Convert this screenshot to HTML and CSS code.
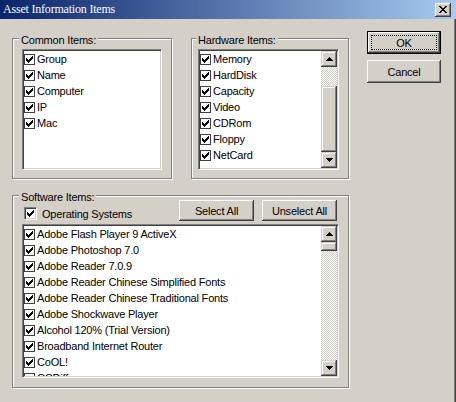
FILE: index.html
```html
<!DOCTYPE html>
<html>
<head>
<meta charset="utf-8">
<title>Asset Information Items</title>
<link rel="stylesheet" href="styles.css">
</head>
<body>
<svg class="defs" width="0" height="0" aria-hidden="true">
  <defs>
    <symbol id="chk" viewBox="0 0 7 7"><path d="M6 0h1v1h-1z M5 1h2v1h-2z M0 2h1v1h-1z M4 2h3v1h-3z M0 3h2v1h-2z M3 3h3v1h-3z M0 4h5v1h-5z M1 5h3v1h-3z M2 6h1v1h-1z"/></symbol>
    <symbol id="up" viewBox="0 0 7 4"><path d="M3 0h1v1h-1z M2 1h3v1h-3z M1 2h5v1h-5z M0 3h7v1h-7z"/></symbol>
    <symbol id="dn" viewBox="0 0 7 4"><path d="M0 0h7v1h-7z M1 1h5v1h-5z M2 2h3v1h-3z M3 3h1v1h-1z"/></symbol>
    <symbol id="x" viewBox="0 0 8 7"><path d="M0 0h2v1h-2z M6 0h2v1h-2z M1 1h2v1h-2z M5 1h2v1h-2z M2 2h4v1h-4z M3 3h2v1h-2z M2 4h4v1h-4z M1 5h2v1h-2z M5 5h2v1h-2z M0 6h2v1h-2z M6 6h2v1h-2z"/></symbol>
  </defs>
</svg>
<div class="window">
  <div class="titlebar">
    <span class="title">Asset Information Items</span>
    <span class="close"><svg class="xg"><use href="#x"/></svg></span>
  </div>
  <div class="client">
    <div class="main">
      <div class="toprow">
        <div class="group g-common">
          <span class="glabel">Common Items:</span>
          <div class="list l-common">
            <div class="items">
              <div class="row"><span class="cb"><svg><use href="#chk"/></svg></span>Group</div>
              <div class="row"><span class="cb"><svg><use href="#chk"/></svg></span>Name</div>
              <div class="row"><span class="cb"><svg><use href="#chk"/></svg></span>Computer</div>
              <div class="row"><span class="cb"><svg><use href="#chk"/></svg></span>IP</div>
              <div class="row"><span class="cb"><svg><use href="#chk"/></svg></span>Mac</div>
            </div>
          </div>
        </div>
        <div class="group g-hw">
          <span class="glabel gl-hw">Hardware Items:</span>
          <div class="list l-hw">
            <div class="items">
              <div class="row"><span class="cb"><svg><use href="#chk"/></svg></span>Memory</div>
              <div class="row"><span class="cb"><svg><use href="#chk"/></svg></span>HardDisk</div>
              <div class="row"><span class="cb"><svg><use href="#chk"/></svg></span>Capacity</div>
              <div class="row"><span class="cb"><svg><use href="#chk"/></svg></span>Video</div>
              <div class="row"><span class="cb"><svg><use href="#chk"/></svg></span>CDRom</div>
              <div class="row"><span class="cb"><svg><use href="#chk"/></svg></span>Floppy</div>
              <div class="row"><span class="cb"><svg><use href="#chk"/></svg></span>NetCard</div>
            </div>
            <div class="sb">
              <div class="sbtn"><svg class="arr"><use href="#up"/></svg></div>
              <div class="track hw-t1"></div>
              <div class="thumb hw-thumb"></div>
              <div class="track fill"></div>
              <div class="sbtn"><svg class="arr"><use href="#dn"/></svg></div>
            </div>
          </div>
        </div>
      </div>
      <div class="group g-sw">
        <span class="glabel">Software Items:</span>
        <div class="swhead">
          <div class="os">
            <span class="cb3d"><svg><use href="#chk"/></svg></span>
            <span>Operating Systems</span>
          </div>
          <div class="swbtns">
            <div class="btn btn-sm">Select All</div>
            <div class="btn btn-sm">Unselect All</div>
          </div>
        </div>
        <div class="list l-sw">
          <div class="items">
            <div class="row"><span class="cb"><svg><use href="#chk"/></svg></span>Adobe Flash Player 9 ActiveX</div>
            <div class="row"><span class="cb"><svg><use href="#chk"/></svg></span>Adobe Photoshop 7.0</div>
            <div class="row"><span class="cb"><svg><use href="#chk"/></svg></span>Adobe Reader 7.0.9</div>
            <div class="row"><span class="cb"><svg><use href="#chk"/></svg></span>Adobe Reader Chinese Simplified Fonts</div>
            <div class="row"><span class="cb"><svg><use href="#chk"/></svg></span>Adobe Reader Chinese Traditional Fonts</div>
            <div class="row"><span class="cb"><svg><use href="#chk"/></svg></span>Adobe Shockwave Player</div>
            <div class="row"><span class="cb"><svg><use href="#chk"/></svg></span>Alcohol 120% (Trial Version)</div>
            <div class="row"><span class="cb"><svg><use href="#chk"/></svg></span>Broadband Internet Router</div>
            <div class="row"><span class="cb"><svg><use href="#chk"/></svg></span>CoOL!</div>
            <div class="row"><span class="cb"></span>CCDiff</div>
          </div>
          <div class="sb">
            <div class="sbtn"><svg class="arr"><use href="#up"/></svg></div>
            <div class="thumb sw-thumb"></div>
            <div class="track fill"></div>
            <div class="sbtn"><svg class="arr"><use href="#dn"/></svg></div>
          </div>
        </div>
      </div>
    </div>
    <div class="buttons">
      <div class="btn btn-default">OK</div>
      <div class="btn">Cancel</div>
    </div>
  </div>
</div>
</body>
</html>
```
FILE: styles.css
```css
* { box-sizing: border-box; }
html, body { margin: 0; padding: 0; }
body {
  width: 456px;
  height: 402px;
  overflow: hidden;
  background: #d4d0c8;
  font-family: "Liberation Sans", Arial, sans-serif;
  font-size: 11px;
  letter-spacing: -0.2px;
  color: #000;
}
.defs { position: absolute; width: 0; height: 0; }

.window {
  width: 456px;
  height: 402px;
  background: #d4d0c8;
  box-shadow: inset -1px 0 #404040, inset -2px 0 #808080;
}
.titlebar {
  height: 19px;
  background: linear-gradient(to right, #0a246a, #a6caf0);
  display: flex;
  align-items: center;
  justify-content: space-between;
  padding: 0 5px 0 3px;
}
.title {
  font-family: "Liberation Serif", "Times New Roman", serif;
  font-size: 12px;
  color: #fff;
  letter-spacing: -0.2px;
}
.close {
  width: 16px;
  height: 14px;
  background: #d4d0c8;
  box-shadow: inset -1px -1px #404040, inset 1px 1px #fff, inset -2px -2px #808080, inset 2px 2px #d4d0c8;
  display: flex;
  align-items: center;
  justify-content: center;
}
.xg { width: 8px; height: 7px; display: block; }

.client { display: flex; padding: 12px 0 0 12px; }
.main { display: flex; flex-direction: column; gap: 16px; margin-top: 7px; width: 337px; }
.toprow { display: flex; gap: 19px; }

.group {
  position: relative;
  border: 1px solid #808080;
  box-shadow: inset 1px 1px #fff, 1px 1px #fff;
}
.g-common { width: 160px; height: 141px; padding: 10px 0 0 9px; }
.g-hw { width: 158px; height: 141px; padding: 10px 0 0 6px; }
.g-sw { width: 337px; height: 193px; padding: 4px 8px 0 9px; }
.glabel {
  position: absolute;
  top: -6px;
  left: 6px;
  padding: 0 2px;
  line-height: 14px;
  background: #d4d0c8;
  white-space: nowrap;
}
.gl-hw { left: 4px; }

.list {
  display: flex;
  background: #fff;
  border: 1px solid;
  border-color: #808080 #fff #fff #808080;
  box-shadow: inset 1px 1px #404040, inset -1px -1px #d4d0c8;
  padding: 1px;
}
.l-common { width: 140px; height: 121px; }
.l-hw { width: 141px; height: 121px; }
.l-sw { width: 317px; height: 154px; }
.items { flex: 1; overflow: hidden; min-width: 0; }
.row {
  height: 16px;
  line-height: 16px;
  display: flex;
  align-items: center;
  white-space: nowrap;
}
.cb {
  width: 11px;
  height: 11px;
  flex: none;
  border: 1px solid #404040;
  background: #fff;
  margin: 1px 2px 0 0;
  display: flex;
  align-items: center;
  justify-content: center;
}
.cb svg { width: 7px; height: 7px; display: block; }

.sb { width: 16px; flex: none; display: flex; flex-direction: column; }
.sbtn, .thumb {
  flex: none;
  background: #d4d0c8;
  box-shadow: inset -1px -1px #404040, inset 1px 1px #d4d0c8, inset -2px -2px #808080, inset 2px 2px #fff;
}
.sbtn { height: 16px; display: flex; align-items: center; justify-content: center; }
.arr { width: 7px; height: 4px; display: block; }
.track { flex: none; background: repeating-conic-gradient(#fff 0 25%, #d4d0c8 0 50%) 0 0 / 2px 2px; }
.track.fill { flex: 1; }
.hw-t1 { height: 19px; }
.hw-thumb { height: 66px; }
.sw-thumb { height: 9px; }

.swhead { display: flex; height: 21px; margin-bottom: 3px; }
.os { display: flex; align-items: center; align-self: flex-end; margin: 0 0 1px 2px; }
.cb3d {
  width: 13px;
  height: 13px;
  flex: none;
  background: #fff;
  border: 1px solid;
  border-color: #808080 #fff #fff #808080;
  box-shadow: inset 1px 1px #404040, inset -1px -1px #d4d0c8;
  margin-right: 5px;
  display: flex;
  align-items: center;
  justify-content: center;
}
.cb3d svg { width: 7px; height: 7px; display: block; }
.swbtns { display: flex; gap: 8px; margin-left: auto; margin-right: 3px; }

.btn {
  position: relative;
  width: 74px;
  height: 23px;
  background: #d4d0c8;
  box-shadow: inset -1px -1px #404040, inset 1px 1px #fff, inset -2px -2px #808080, inset 2px 2px #d4d0c8;
  display: flex;
  align-items: center;
  justify-content: center;
  white-space: nowrap;
}
.btn-sm { width: 75px; height: 21px; }
.btn-default { border: 1px solid #000; }
.btn-default::after {
  content: "";
  position: absolute;
  inset: 3px;
  border: 1px dotted #000;
}
.buttons { display: flex; flex-direction: column; gap: 6px; margin-left: 18px; }
```
